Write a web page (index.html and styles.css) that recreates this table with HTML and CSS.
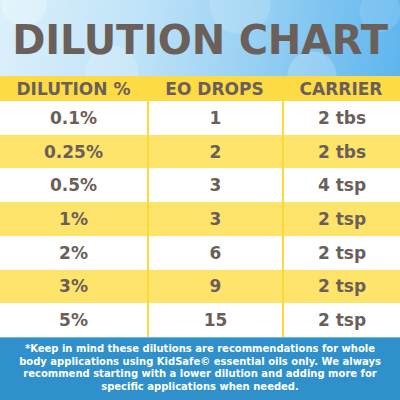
FILE: index.html
```html
<!DOCTYPE html>
<html lang="en">
  <head>
    <meta charset="UTF-8" />
    <title>Dilution Chart</title>
    <link rel="stylesheet" href="styles.css">
  </head>
  <body>
    <div class="chart">
      <div class="banner">
        <h1>DILUTION CHART</h1>
      </div>
      <div class="grid">
        <div class="head">DILUTION %</div>
        <div class="head">EO DROPS</div>
        <div class="head">CARRIER</div>

        <div class="cell">0.1%</div><div class="cell">1</div><div class="cell">2 tbs</div>
        <div class="cell alt">0.25%</div><div class="cell alt">2</div><div class="cell alt">2 tbs</div>
        <div class="cell">0.5%</div><div class="cell">3</div><div class="cell">4 tsp</div>
        <div class="cell alt">1%</div><div class="cell alt">3</div><div class="cell alt">2 tsp</div>
        <div class="cell">2%</div><div class="cell">6</div><div class="cell">2 tsp</div>
        <div class="cell alt">3%</div><div class="cell alt">9</div><div class="cell alt">2 tsp</div>
        <div class="cell">5%</div><div class="cell">15</div><div class="cell">2 tsp</div>
      </div>
      <div class="note">
        *Keep in mind these dilutions are recommendations for whole<br>
        body applications using KidSafe&copy; essential oils only. We always<br>
        recommend starting with a lower dilution and adding more for<br>
        specific applications when needed.
      </div>
    </div>
  </body>
</html>
```

FILE: styles.css
```css
*{
    box-sizing: border-box;
    margin: 0;
    padding: 0;
}
body{
    font-family: "DejaVu Sans", sans-serif;
    font-weight: bold;
    color: #6b5f59;
}
.chart{
    width: 400px;
    height: 400px;
    display: flex;
    flex-direction: column;
    overflow: hidden;
}
/* sky banner */
.banner{
    height: 76px;
    display: flex;
    align-items: center;
    justify-content: center;
    background:
        radial-gradient(circle at 6% 5%, rgba(255,255,255,0.25) 0 22px, transparent 23px),
        radial-gradient(circle at 28% 95%, rgba(255,255,255,0.18) 0 26px, transparent 27px),
        radial-gradient(circle at 60% 5%, rgba(255,255,255,0.15) 0 30px, transparent 31px),
        radial-gradient(circle at 78% 100%, rgba(255,255,255,0.2) 0 24px, transparent 25px),
        radial-gradient(circle at 95% 15%, rgba(255,255,255,0.12) 0 20px, transparent 21px),
        linear-gradient(100deg, #dcf0fb 0%, #bfe3f8 35%, #95cff3 65%, #5db5ee 100%);
}
.banner h1{
    font-size: 40px;
    letter-spacing: -0.2px;
    line-height: 1;
    color: #6b5f59;
    padding-top: 4px;
}
.grid{
    display: grid;
    grid-template-columns: 147px 135px 118px;
    grid-template-rows: 25px repeat(7, 1fr);
    flex: 1;
    background: #fff;
}
.head{
    background: #fddb45;
    display: flex;
    align-items: center;
    justify-content: center;
    font-size: 17px;
}
.cell{
    display: flex;
    align-items: center;
    justify-content: center;
    font-size: 17px;
    border-left: 2px solid #fbd93c;
}
.cell:nth-child(3n + 1){
    border-left: none;
}
.cell.alt{
    background: #fee46b;
}
.note{
    height: 63px;
    background: #2f90cc;
    border-top: 1px solid #6fb6e3;
    color: #fff;
    font-size: 10px;
    line-height: 12.5px;
    text-align: center;
    white-space: nowrap;
    padding: 5px 0 0;
}
```
